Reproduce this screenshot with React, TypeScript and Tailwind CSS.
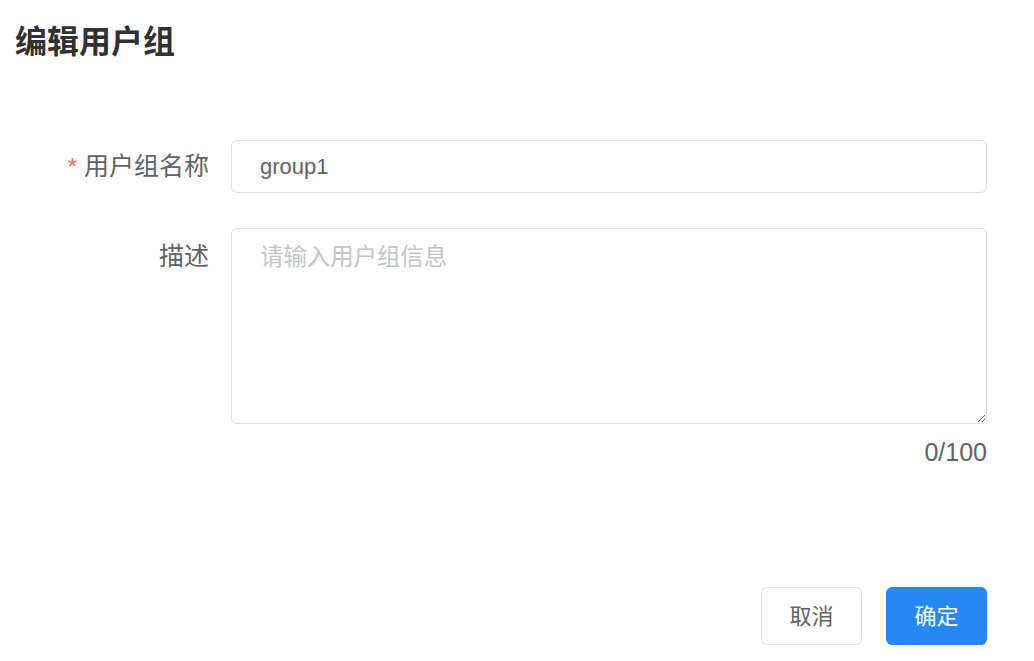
import React, { useState } from "react";

const font = { fontFamily: '"Liberation Sans", "Noto Sans CJK SC", sans-serif' };

const App = () => {
    const [name, setName] = useState("group1");
    const [desc, setDesc] = useState("");

    return (
        <div className="w-[1034px] h-[661px] bg-white pl-[15px] pr-[47px] pt-[20px] flex flex-col" style={font}>
            <h1 className="text-[32px] leading-[45px] font-bold text-[#303133]">编辑用户组</h1>

            {/* Form */}
            <div className="mt-[75px] flex flex-col">
                <div className="flex items-center gap-[22px]">
                    <label className="w-[194px] text-right text-[25px] leading-[53px] text-[#606266] whitespace-nowrap">
                        <span className="text-[#f56c6c] text-[24px] mr-[7px]">*</span>用户组名称
                    </label>
                    <input
                        value={name}
                        onChange={(e) => setName(e.target.value)}
                        className="flex-1 h-[53px] border border-[#dcdfe6] rounded-[6px] pl-[28px] pr-4 text-[22px] text-[#606266] outline-none"
                    />
                </div>

                <div className="flex items-start gap-[22px] mt-[35px]">
                    <label className="w-[194px] pt-[2px] text-right text-[25px] leading-[53px] text-[#606266]">描述</label>
                    <div className="flex-1 flex flex-col">
                        <textarea
                            value={desc}
                            onChange={(e) => setDesc(e.target.value)}
                            maxLength={100}
                            placeholder="请输入用户组信息"
                            className="h-[196px] border border-[#dcdfe6] rounded-[6px] pl-[28px] pr-4 pt-[12px] text-[23.4px] leading-[33px] text-[#606266] placeholder-[#c0c4cc] outline-none resize-y"
                        />
                        <div className="text-right text-[25px] leading-[33px] mt-[12px] text-[#606266]">{desc.length}/100</div>
                    </div>
                </div>
            </div>

            {/* Footer */}
            <div className="mt-auto mb-[16px] flex justify-end gap-[24px]">
                <button className="w-[101px] h-[58px] border border-[#dcdfe6] rounded-[6px] bg-white text-[22px] text-[#606266]">取消</button>
                <button className="w-[101px] h-[58px] rounded-[6px] bg-[#2688f5] text-[22px] text-white">确定</button>
            </div>
        </div>
    );
};

export default App;
